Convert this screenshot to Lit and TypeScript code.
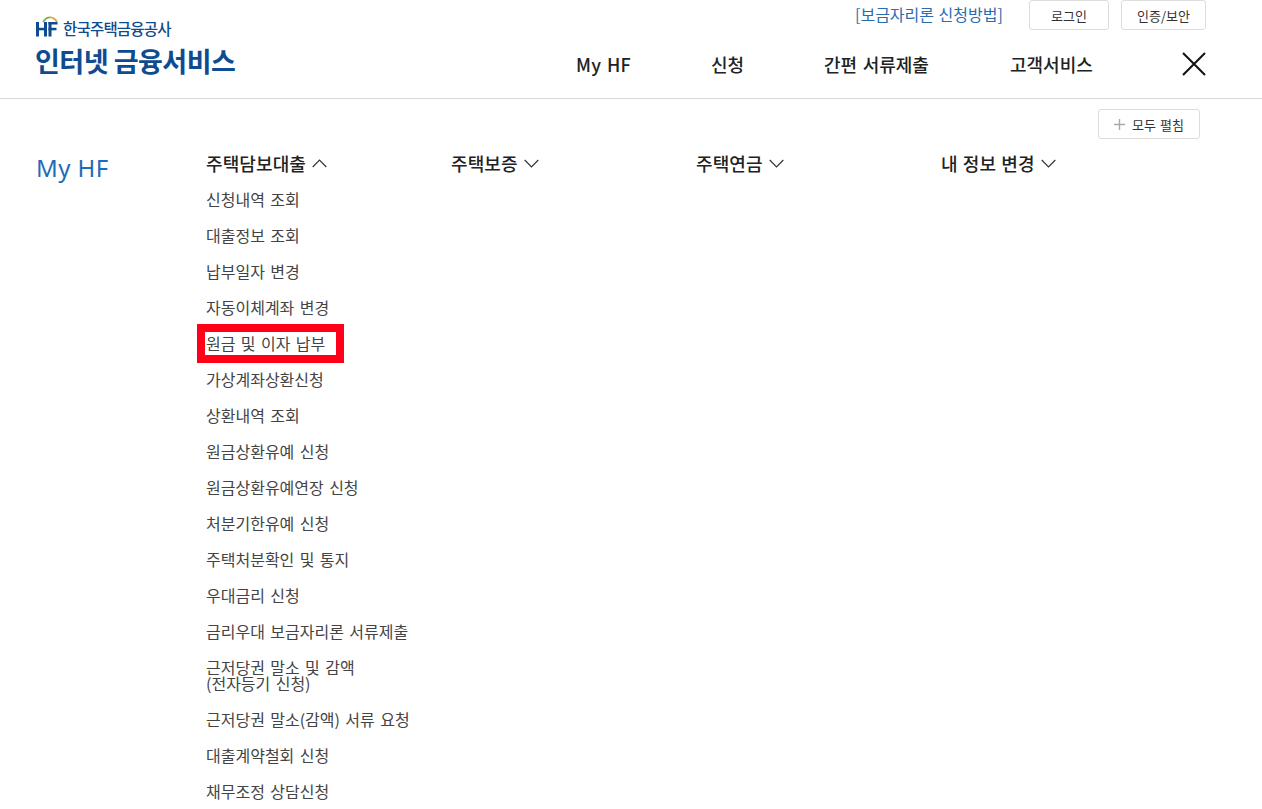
import { LitElement, html, css } from "lit";
import { customElement } from "lit/decorators.js";

const chevDown = html`<svg class="chev" width="15" height="9" viewBox="0 0 15 9"><path d="M.7 1l6.800 6.800L14.300 1" fill="none" stroke="#333" stroke-width="1.200"/></svg>`;
const chevUp = html`<svg class="chev" width="15" height="9" viewBox="0 0 15 9"><path d="M.7 8l6.800-6.800L14.300 8" fill="none" stroke="#333" stroke-width="1.200"/></svg>`;

const items: (string | string[])[] = [
  "신청내역 조회", "대출정보 조회", "납부일자 변경", "자동이체계좌 변경", "원금 및 이자 납부",
  "가상계좌상환신청", "상환내역 조회", "원금상환유예 신청", "원금상환유예연장 신청", "처분기한유예 신청",
  "주택처분확인 및 통지", "우대금리 신청", "금리우대 보금자리론 서류제출",
  ["근저당권 말소 및 감액", "(전자등기 신청)"], "근저당권 말소(감액) 서류 요청", "대출계약철회 신청", "채무조정 상담신청",
];

@customElement("app-root")
export class AppRoot extends LitElement {
  static styles = css`
    :host { display: block; width: 1262px; height: 809px; overflow: hidden; background: #fff; font-family: "Noto Sans CJK KR", "Noto Sans", sans-serif; color: #222; }
    header { box-sizing: border-box; height: 99px; border-bottom: 1px solid #d9d9d9; display: flex; padding-left: 35px; }
    .brand { width: 541px; padding-top: 16px; color: #0f4c8f; flex: none; }
    .org { display: flex; align-items: center; gap: 5px; height: 22px; font-size: 15.5px; font-weight: 500; letter-spacing: -0.8px; line-height: 24px; }
    .org span { padding-top: 2px; }
    .svc { font-size: 27px; font-weight: 700; line-height: 40px; letter-spacing: -0.5px; margin-top: 3px; white-space: nowrap; }
    .right { flex: 1; display: flex; flex-direction: column; }
    .util { display: flex; align-items: center; height: 30px; padding-left: 279px; }
    .util a { color: #2a6cb0; font-size: 16px; width: 174px; margin-top: -3px; word-spacing: 1px; white-space: nowrap; }
    .btn { box-sizing: border-box; height: 30px; border: 1px solid #ddd; border-radius: 3px; font-size: 13px; color: #333; display: flex; align-items: center; justify-content: center; background: #fff; }
    .b1 { width: 80px; margin-right: 12px; }
    .b2 { width: 85px; }
    nav { display: flex; align-items: center; margin-top: 18px; height: 32px; font-size: 18px; font-weight: 500; color: #222; white-space: nowrap; word-spacing: 1.5px; }
    nav span:nth-child(1) { width: 135px; letter-spacing: 0.2px; }
    nav span:nth-child(2) { width: 113px; }
    nav span:nth-child(3) { width: 186px; }
    nav span:nth-child(4) { width: 172px; }
    .close { flex: none; display: block; }
    .toolbar { display: flex; justify-content: flex-end; padding: 10px 62px 0 0; }
    .toolbar .btn { width: 102px; gap: 7px; word-spacing: 1px; }
    .main { display: flex; padding-left: 36px; margin-top: 12px; }
    .title { width: 170px; margin-top: 1px; color: #1f6cb8; font-size: 24px; line-height: 32px; letter-spacing: 0.4px; flex: none; font-weight: 400; font-family: "Noto Sans", sans-serif; }
    .col { width: 245px; flex: none; }
    .head { display: flex; align-items: center; gap: 6px; font-size: 18px; font-weight: 500; line-height: 24px; color: #222; height: 24px; word-spacing: 1px; letter-spacing: 0.1px; white-space: nowrap; }
    ul { list-style: none; margin: 14px 0 0; padding: 0; }
    li { font-size: 16px; line-height: 20px; color: #444; padding-bottom: 16px; word-spacing: 1.8px; white-space: nowrap; }
    li.multi { line-height: 16px; padding: 2px 0 18px; }
    li.hl { position: relative; }
    li.hl::before { content: ""; position: absolute; left: -9px; top: -9px; width: 147px; height: 39px; box-sizing: border-box; border: 8px solid #ff0019; }
  `;

  render() {
    return html`
      <header>
        <div class="brand">
          <div class="org">
            <svg width="23" height="22" viewBox="0 0 23 22">
              <path d="M8 6C10 2.500 13 1.200 15.500 1.300" fill="none" stroke="#7fb04a" stroke-width="1.800"/>
              <path d="M15.500 1.300C18.500 1.500 20.800 3.500 22 6" fill="none" stroke="#e0a23c" stroke-width="1.800"/>
              <rect x="1" y="6" width="3" height="14.500" fill="#0f4c8f"/>
              <rect x="9" y="6" width="3" height="14.500" fill="#0f4c8f"/>
              <rect x="1" y="11.800" width="11" height="2.500" fill="#0f4c8f"/>
              <rect x="13.500" y="6" width="3" height="14.500" fill="#0f4c8f"/>
              <rect x="13.500" y="6" width="9" height="2.500" fill="#0f4c8f"/>
              <rect x="13.500" y="11.800" width="8" height="2.500" fill="#0f4c8f"/>
            </svg>
            <span>한국주택금융공사</span>
          </div>
          <div class="svc">인터넷 금융서비스</div>
        </div>
        <div class="right">
          <div class="util">
            <a>[보금자리론 신청방법]</a>
            <div class="btn b1">로그인</div>
            <div class="btn b2">인증/보안</div>
          </div>
          <nav>
            <span>My HF</span><span>신청</span><span>간편 서류제출</span><span>고객서비스</span>
            <svg class="close" width="24" height="24" viewBox="0 0 24 24"><path d="M1 1l22 22M23 1L1 23" stroke="#111" stroke-width="2" fill="none"/></svg>
          </nav>
        </div>
      </header>
      <div class="toolbar">
        <div class="btn">
          <svg width="11" height="11" viewBox="0 0 11 11"><path d="M5.500 0v11M0 5.500h11" stroke="#aaa" stroke-width="1.400"/></svg>
          모두 펼침
        </div>
      </div>
      <div class="main">
        <div class="title">My HF</div>
        <div class="col">
          <div class="head">주택담보대출 ${chevUp}</div>
          <ul>
            ${items.map((it, i) => Array.isArray(it)
              ? html`<li class="multi">${it[0]}<br />${it[1]}</li>`
              : html`<li class=${i === 4 ? "hl" : ""}>${it}</li>`)}
          </ul>
        </div>
        <div class="col"><div class="head">주택보증 ${chevDown}</div></div>
        <div class="col"><div class="head">주택연금 ${chevDown}</div></div>
        <div class="col"><div class="head">내 정보 변경 ${chevDown}</div></div>
      </div>
    `;
  }
}
